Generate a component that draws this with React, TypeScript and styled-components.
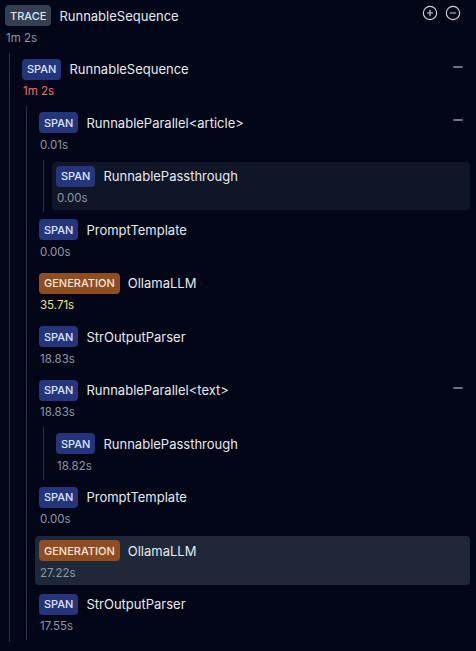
import React from "react";
import styled, { createGlobalStyle } from "styled-components";
import { CirclePlus, CircleMinus, Minus } from "lucide-react";

const GlobalStyle = createGlobalStyle`
  html, body {
    margin: 0;
    padding: 0;
    background: #020617;
  }
  body {
    font-family: Inter, "Noto Sans", "Liberation Sans", sans-serif;
    -webkit-font-smoothing: antialiased;
  }
`;

type Kind = "TRACE" | "SPAN" | "GENERATION";
type Tone = "muted" | "red" | "yellow";
type Highlight = "none" | "dark" | "selected";

interface TreeNode {
  kind: Kind;
  name: string;
  duration: string;
  tone?: Tone;
  highlight?: Highlight;
  children?: TreeNode[];
}

const tree: TreeNode = {
  kind: "TRACE",
  name: "RunnableSequence",
  duration: "1m 2s",
  children: [
    {
      kind: "SPAN",
      name: "RunnableSequence",
      duration: "1m 2s",
      tone: "red",
      children: [
        {
          kind: "SPAN",
          name: "RunnableParallel<article>",
          duration: "0.01s",
          children: [
            { kind: "SPAN", name: "RunnablePassthrough", duration: "0.00s", highlight: "dark" },
          ],
        },
        { kind: "SPAN", name: "PromptTemplate", duration: "0.00s" },
        { kind: "GENERATION", name: "OllamaLLM", duration: "35.71s", tone: "yellow" },
        { kind: "SPAN", name: "StrOutputParser", duration: "18.83s" },
        {
          kind: "SPAN",
          name: "RunnableParallel<text>",
          duration: "18.83s",
          children: [{ kind: "SPAN", name: "RunnablePassthrough", duration: "18.82s" }],
        },
        { kind: "SPAN", name: "PromptTemplate", duration: "0.00s" },
        { kind: "GENERATION", name: "OllamaLLM", duration: "27.22s", highlight: "selected" },
        { kind: "SPAN", name: "StrOutputParser", duration: "17.55s" },
      ],
    },
  ],
};

const Page = styled.div`
  padding: 1px 6px 0 1px;
  min-height: 651px;
  box-sizing: border-box;
  background: #020617;
`;

const NodeWrap = styled.div<{ $afterGroup: boolean; $first: boolean }>`
  display: flex;
  flex-direction: column;
  margin-top: ${(p) => (p.$first ? 0 : p.$afterGroup ? 3 : 5)}px;
`;

const Row = styled.div<{ $highlight: Highlight }>`
  display: flex;
  flex-direction: column;
  padding: 4px;
  border-radius: 4px;
  background: ${(p) =>
    p.$highlight === "dark" ? "#0f1628" : p.$highlight === "selected" ? "#1f2839" : "transparent"};
`;

const Header = styled.div`
  display: flex;
  align-items: flex-start;
  height: 21px;
`;

const Title = styled.div`
  display: flex;
  align-items: center;
  gap: 8px;
  flex: 1;
  min-width: 0;
  height: 21px;
`;

const badgeColors: Record<Kind, { bg: string; fg: string }> = {
  TRACE: { bg: "#353f52", fg: "#dfe4ec" },
  SPAN: { bg: "#24357c", fg: "#dde5fb" },
  GENERATION: { bg: "#8f4d22", fg: "#f6e6da" },
};

const Badge = styled.span<{ $kind: Kind }>`
  display: inline-flex;
  align-items: center;
  height: 21px;
  padding: 0 5px;
  border-radius: 4px;
  font-size: 11px;
  font-weight: 500;
  background: ${(p) => badgeColors[p.$kind].bg};
  color: ${(p) => badgeColors[p.$kind].fg};
  box-sizing: border-box;
`;

const Name = styled.span`
  font-size: 13px;
  color: #e6e9ef;
  white-space: nowrap;
`;

const toneColor: Record<Tone, string> = {
  muted: "#8f99a8",
  red: "#f26d6d",
  yellow: "#f6e27a",
};

const Duration = styled.div<{ $tone: Tone }>`
  margin-top: 3.5px;
  font-size: 11.5px;
  line-height: 16px;
  padding-left: 1px;
  color: ${(p) => toneColor[p.$tone]};
`;

const IconGroup = styled.div`
  display: flex;
  gap: 7px;
  margin-right: 5px;
  color: #cfd5de;
`;

const IconButton = styled.span`
  display: inline-flex;
  width: 16px;
  height: 16px;
`;

const Collapse = styled.span`
  display: inline-flex;
  width: 16px;
  height: 16px;
  color: #7d8594;
`;

const Children = styled.div`
  display: flex;
  flex-direction: column;
  margin: 3px 0 0 8px;
  padding: 2px 0 2px 8px;
  border-left: 1px solid #283245;
`;

function Node({
  node,
  isRoot,
  first,
  afterGroup,
}: {
  node: TreeNode;
  isRoot?: boolean;
  first: boolean;
  afterGroup: boolean;
}) {
  const hasChildren = !!node.children && node.children.length > 0;
  return (
    <NodeWrap $first={first} $afterGroup={afterGroup}>
      <Row $highlight={node.highlight ?? "none"}>
        <Header>
          <Title>
            <Badge $kind={node.kind}>{node.kind}</Badge>
            <Name>{node.name}</Name>
          </Title>
          {isRoot ? (
            <IconGroup>
              <IconButton>
                <CirclePlus size={16} strokeWidth={1.7} />
              </IconButton>
              <IconButton>
                <CircleMinus size={16} strokeWidth={1.7} />
              </IconButton>
            </IconGroup>
          ) : hasChildren ? (
            <Collapse>
              <Minus size={16} strokeWidth={2.6} strokeLinecap="butt" />
            </Collapse>
          ) : null}
        </Header>
        <Duration $tone={node.tone ?? "muted"}>{node.duration}</Duration>
      </Row>
      {hasChildren && (
        <Children>
          {node.children!.map((c, i) => (
            <Node
              key={i}
              node={c}
              first={i === 0}
              afterGroup={i > 0 && !!node.children![i - 1].children}
            />
          ))}
        </Children>
      )}
    </NodeWrap>
  );
}

export default function App() {
  return (
    <>
      <GlobalStyle />
      <Page>
        <Node node={tree} isRoot first afterGroup={false} />
      </Page>
    </>
  );
}
